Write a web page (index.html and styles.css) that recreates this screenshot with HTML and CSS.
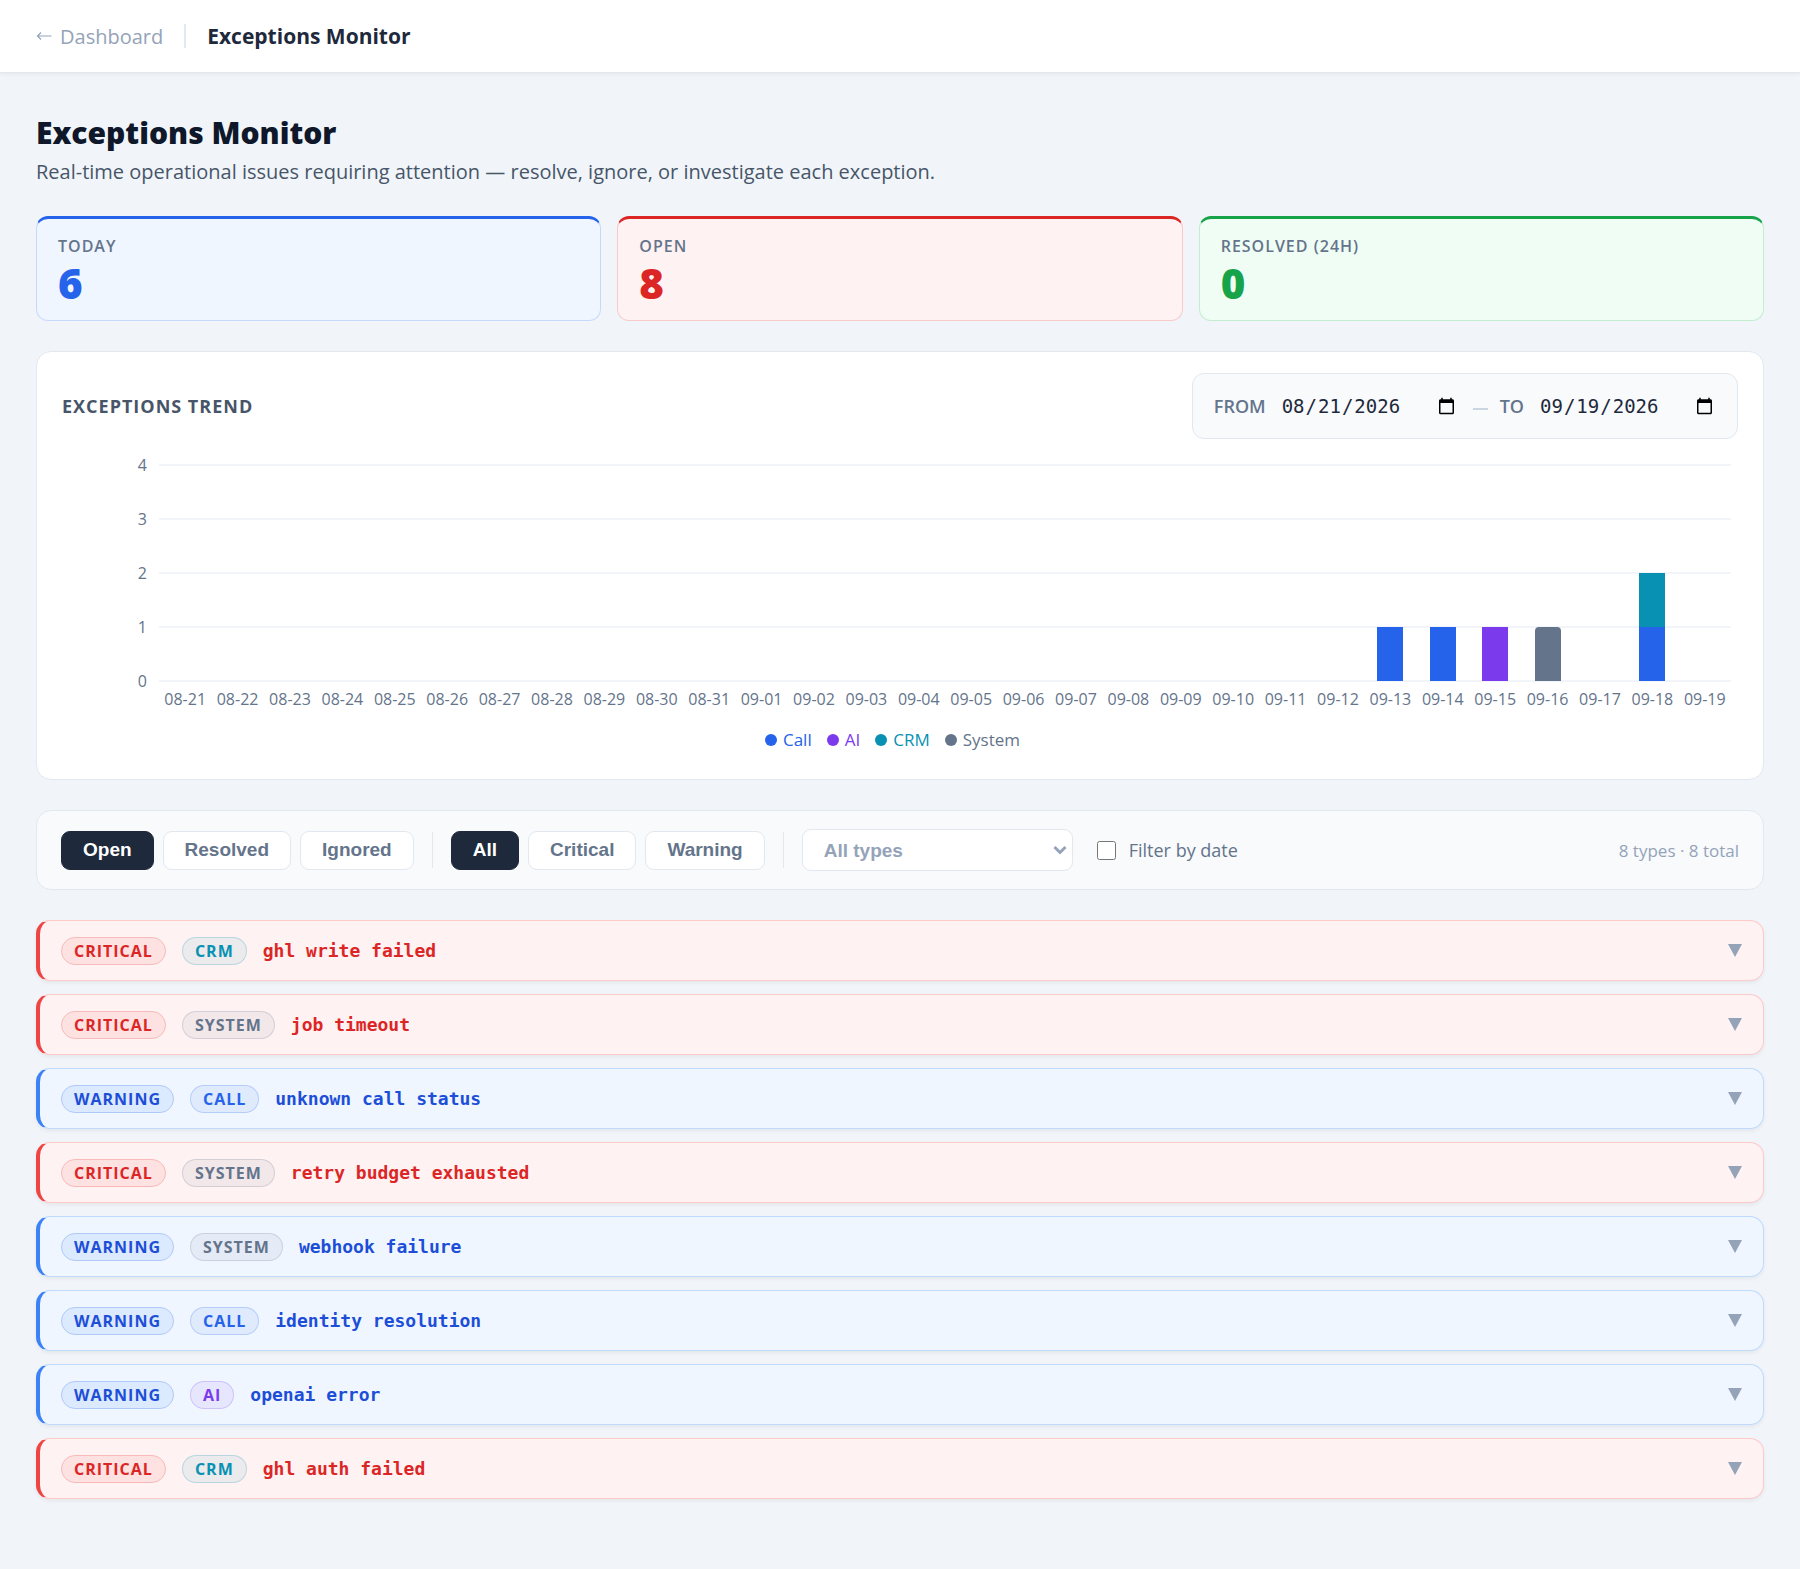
FILE: index.html
```html
<!DOCTYPE html>
<html lang="en">
<head>
<meta charset="utf-8">
<meta name="viewport" content="width=device-width, initial-scale=1">
<title>Exceptions Monitor</title>
<link rel="stylesheet" href="styles.css">
</head>
<body>
<svg class="sprite" aria-hidden="true">
  <symbol id="caret" viewBox="0 0 14 13"><path d="M0 0h14L7 13z" fill="currentColor"/></symbol>
</svg>
<header class="topbar">
  <a class="back" href="#"><svg class="back-arrow" viewBox="0 0 16 10" aria-hidden="true"><path d="M15.500 5H1.500M5 1.500L1.500 5L5 8.500" fill="none" stroke="currentColor" stroke-width="1.200"/></svg>Dashboard</a>
  <span class="divider"></span>
  <span class="topbar-title">Exceptions Monitor</span>
</header>
<main class="page">
  <div class="intro">
    <h1>Exceptions Monitor</h1>
    <p>Real-time operational issues requiring attention — resolve, ignore, or investigate each exception.</p>
  </div>

  <section class="stats">
    <div class="stat stat-today"><span class="stat-label">TODAY</span><strong class="stat-value">6</strong></div>
    <div class="stat stat-open"><span class="stat-label">OPEN</span><strong class="stat-value">8</strong></div>
    <div class="stat stat-resolved"><span class="stat-label">RESOLVED (24H)</span><strong class="stat-value">0</strong></div>
  </section>

  <section class="trend">
    <div class="trend-head">
      <h2>EXCEPTIONS TREND</h2>
      <div class="range">
        <label for="from">FROM</label><input id="from" type="date" value="2026-08-21">
        <span class="range-dash"></span>
        <label for="to">TO</label><input id="to" type="date" value="2026-09-19">
      </div>
    </div>
    <div class="chart">
      <div class="y-axis"><span>4</span><span>3</span><span>2</span><span>1</span><span>0</span></div>
      <div class="plot">
        <div class="day"></div><div class="day"></div><div class="day"></div><div class="day"></div><div class="day"></div><div class="day"></div>
        <div class="day"></div><div class="day"></div><div class="day"></div><div class="day"></div><div class="day"></div><div class="day"></div>
        <div class="day"></div><div class="day"></div><div class="day"></div><div class="day"></div><div class="day"></div><div class="day"></div>
        <div class="day"></div><div class="day"></div><div class="day"></div><div class="day"></div><div class="day"></div>
        <div class="day"><i class="bar bg-call"></i></div>
        <div class="day"><i class="bar bg-call"></i></div>
        <div class="day"><i class="bar bg-ai"></i></div>
        <div class="day"><i class="bar bg-system"></i></div>
        <div class="day"></div>
        <div class="day"><i class="bar bg-crm"></i><i class="bar bg-call"></i></div>
        <div class="day"></div>
      </div>
      <div class="x-axis">
        <span>08-21</span><span>08-22</span><span>08-23</span><span>08-24</span><span>08-25</span><span>08-26</span><span>08-27</span><span>08-28</span><span>08-29</span><span>08-30</span><span>08-31</span><span>09-01</span><span>09-02</span><span>09-03</span><span>09-04</span><span>09-05</span><span>09-06</span><span>09-07</span><span>09-08</span><span>09-09</span><span>09-10</span><span>09-11</span><span>09-12</span><span>09-13</span><span>09-14</span><span>09-15</span><span>09-16</span><span>09-17</span><span>09-18</span><span>09-19</span>
      </div>
    </div>
    <ul class="legend">
      <li class="fg-call"><i class="dot bg-call"></i>Call</li>
      <li class="fg-ai"><i class="dot bg-ai"></i>AI</li>
      <li class="fg-crm"><i class="dot bg-crm"></i>CRM</li>
      <li class="fg-system"><i class="dot bg-system"></i>System</li>
    </ul>
  </section>

  <section class="filters">
    <div class="group">
      <button class="chip active" type="button">Open</button>
      <button class="chip" type="button">Resolved</button>
      <button class="chip" type="button">Ignored</button>
    </div>
    <span class="filter-sep"></span>
    <div class="group">
      <button class="chip active" type="button">All</button>
      <button class="chip" type="button">Critical</button>
      <button class="chip" type="button">Warning</button>
    </div>
    <span class="filter-sep"></span>
    <div class="type-select">
      <select aria-label="Exception type"><option>All types</option></select>
      <svg class="chevron" viewBox="0 0 14 10" aria-hidden="true"><path d="M1.500 2L7 7.500L12.500 2" fill="none" stroke="currentColor" stroke-width="3"/></svg>
    </div>
    <label class="by-date"><input type="checkbox">Filter by date</label>
    <span class="count">8 types · 8 total</span>
  </section>

  <ul class="list">
    <li><button class="row critical" type="button"><span class="tag level">CRITICAL</span><span class="tag crm">CRM</span><span class="name">ghl write failed</span><svg class="caret"><use href="#caret"/></svg></button></li>
    <li><button class="row critical" type="button"><span class="tag level">CRITICAL</span><span class="tag system">SYSTEM</span><span class="name">job timeout</span><svg class="caret"><use href="#caret"/></svg></button></li>
    <li><button class="row warning" type="button"><span class="tag level">WARNING</span><span class="tag call">CALL</span><span class="name">unknown call status</span><svg class="caret"><use href="#caret"/></svg></button></li>
    <li><button class="row critical" type="button"><span class="tag level">CRITICAL</span><span class="tag system">SYSTEM</span><span class="name">retry budget exhausted</span><svg class="caret"><use href="#caret"/></svg></button></li>
    <li><button class="row warning" type="button"><span class="tag level">WARNING</span><span class="tag system">SYSTEM</span><span class="name">webhook failure</span><svg class="caret"><use href="#caret"/></svg></button></li>
    <li><button class="row warning" type="button"><span class="tag level">WARNING</span><span class="tag call">CALL</span><span class="name">identity resolution</span><svg class="caret"><use href="#caret"/></svg></button></li>
    <li><button class="row warning" type="button"><span class="tag level">WARNING</span><span class="tag ai">AI</span><span class="name">openai error</span><svg class="caret"><use href="#caret"/></svg></button></li>
    <li><button class="row critical" type="button"><span class="tag level">CRITICAL</span><span class="tag crm">CRM</span><span class="name">ghl auth failed</span><svg class="caret"><use href="#caret"/></svg></button></li>
  </ul>
</main>
</body>
</html>
```
FILE: styles.css
```css
* { box-sizing: border-box; }

body {
  margin: 0;
  background: #f1f5f9;
  color: #0f172a;
  font-family: "Open Sans", "Noto Sans", sans-serif;
}

ul { list-style: none; margin: 0; padding: 0; }
.sprite { display: none; }

.bg-call { background: #2563eb; }
.bg-ai { background: #7c3aed; }
.bg-crm { background: #0891b2; }
.bg-system { background: #64748b; }
.fg-call { color: #2563eb; }
.fg-ai { color: #7c3aed; }
.fg-crm { color: #0891b2; }
.fg-system { color: #64748b; }

/* Top bar */
.topbar {
  display: flex;
  align-items: center;
  gap: 21px;
  height: 73px;
  padding: 0 36px;
  background: #fff;
  border-bottom: 1px solid #e2e8f0;
  box-shadow: 0 1px 4px rgba(15, 23, 42, .06);
  font-size: 20px;
}
.back { display: flex; align-items: center; gap: 8px; color: #94a3b8; text-decoration: none; }
.back-arrow { width: 16px; height: 10px; }
.divider { width: 2px; height: 24px; background: #e2e8f0; }
.topbar-title { font-size: 21px; font-weight: 700; color: #1e293b; }

/* Page */
.page { display: flex; flex-direction: column; gap: 30px; padding: 39px 36px 70px; }

.intro h1 { margin: 0; font-size: 30px; font-weight: 800; line-height: 42px; }
.intro p { margin: 0; font-size: 20px; line-height: 36px; color: #475569; }

.stats { display: grid; grid-template-columns: repeat(3, 1fr); gap: 16px; margin-top: -4px; }
.stat {
  display: flex;
  flex-direction: column;
  padding: 15px 21px 13px;
  border: 1px solid;
  border-top-width: 3px;
  border-radius: 12px;
}
.stat-label { font-size: 16px; font-weight: 600; line-height: 24px; letter-spacing: 1px; color: #64748b; }
.stat-value { font-size: 42px; font-weight: 800; line-height: 49px; }
.stat-today { background: #eff6ff; border-color: #2563eb #c7d9fb #c7d9fb; color: #2563eb; }
.stat-open { background: #fef2f2; border-color: #dc2626 #f8caca #f8caca; color: #dc2626; }
.stat-resolved { background: #f0fdf4; border-color: #16a34a #c3ecd0 #c3ecd0; color: #16a34a; }

/* Trend chart */
.trend { padding: 21px 25px 26px; background: #fff; border: 1px solid #e2e8f0; border-radius: 15px; }
.trend-head { display: flex; align-items: center; justify-content: space-between; }
.trend h2 { margin: 0; font-size: 18px; font-weight: 700; letter-spacing: 1px; color: #475569; }
.range {
  display: flex;
  align-items: center;
  height: 66px;
  padding: 0 21px;
  background: #f8fafc;
  border: 1px solid #e2e8f0;
  border-radius: 12px;
  font-size: 18px;
  font-weight: 600;
  color: #64748b;
}
.range input {
  width: 177px;
  margin-left: 15px;
  padding: 0;
  border: 0;
  background: none;
  color: #1e293b;
  font: 19px "DejaVu Sans Mono", monospace;
}
.range-dash { width: 15px; height: 2px; margin: 6px 12px 0 15px; background: #cbd5e1; }

.chart {
  display: grid;
  grid-template-columns: 85px 1fr;
  column-gap: 12px;
  row-gap: 5px;
  padding: 25px 7px 0 0;
  font-size: 16px;
  line-height: 24px;
  color: #64748b;
}
.y-axis { display: flex; flex-direction: column; justify-content: space-between; margin: -11px 0; text-align: right; }
.plot {
  display: grid;
  grid-template-columns: repeat(30, 1fr);
  height: 218px;
  padding-bottom: 1px;
  background: repeating-linear-gradient(#f1f5f9 0 2px, transparent 2px 54px);
}
.day { display: flex; flex-direction: column; justify-content: flex-end; align-items: center; }
.bar { width: 26px; height: 54px; }
.bar.bg-system { border-radius: 4px 4px 0 0; }
.x-axis { grid-column: 2; display: grid; grid-template-columns: repeat(30, 1fr); text-align: center; }

.legend { display: flex; justify-content: center; margin-top: 16px; font-size: 17px; line-height: 26px; }
.legend li { display: flex; align-items: center; gap: 6px; margin-right: 15px; }
.dot { width: 12px; height: 12px; border-radius: 50%; }

/* Filters */
.filters {
  display: flex;
  align-items: center;
  gap: 18px;
  height: 80px;
  padding: 0 24px;
  background: #f8fafc;
  border: 1px solid #e2e8f0;
  border-radius: 15px;
}
.group { display: flex; gap: 9px; }
.chip, .type-select select {
  border: 1px solid #e2e8f0;
  border-radius: 9px;
  background: #fff;
  font: bold 19px "Liberation Sans", Arial, sans-serif;
}
.chip { height: 39px; padding: 0 21px; color: #64748b; }
.chip.active { background: #1e293b; border-color: #1e293b; color: #fff; }
.filter-sep { width: 1px; height: 36px; background: #e2e8f0; }
.type-select { display: grid; align-items: center; }
.type-select select {
  grid-area: 1 / 1;
  appearance: none;
  width: 271px;
  height: 42px;
  padding: 0 21px;
  color: #94a3b8;
}
.chevron { grid-area: 1 / 1; justify-self: end; width: 14px; height: 10px; margin-right: 6px; color: #94a3b8; pointer-events: none; }
.by-date { display: flex; align-items: center; gap: 13px; margin-left: 6px; font-size: 18px; color: #64748b; }
.by-date input { width: 19px; height: 19px; margin: 0; }
.count { margin-left: auto; font-size: 17px; color: #94a3b8; }

/* Exception rows */
.list { display: grid; gap: 13px; }
.row {
  display: flex;
  align-items: center;
  gap: 16px;
  width: 100%;
  height: 61px;
  padding: 0 21px;
  border: 1px solid;
  border-left-width: 4px;
  border-radius: 14px;
  box-shadow: 0 2px 4px rgba(15, 23, 42, .06);
  font: inherit;
  text-align: left;
}
.critical { background: #fef2f2; border-color: #fecaca #fecaca #fecaca #ef4444; color: #dc2626; }
.warning { background: #eff6ff; border-color: #bfdbfe #bfdbfe #bfdbfe #3b82f6; color: #1d4ed8; }
.tag {
  padding: 0 12px;
  border: 1px solid;
  border-radius: 14px;
  font-size: 16px;
  font-weight: 700;
  line-height: 26px;
  letter-spacing: 1px;
}
.critical .level { background: #fee2e2; border-color: #f8baba; }
.warning .level { background: #dbeafe; border-color: #b1c9f7; }
.crm { background: rgba(8, 145, 178, .08); border-color: rgba(8, 145, 178, .22); color: #0891b2; }
.system { background: rgba(100, 116, 139, .08); border-color: rgba(100, 116, 139, .22); color: #64748b; }
.call { background: rgba(37, 99, 235, .08); border-color: rgba(37, 99, 235, .22); color: #2563eb; }
.ai { background: rgba(124, 58, 237, .08); border-color: rgba(124, 58, 237, .22); color: #7c3aed; }
.name { font: bold 18px "DejaVu Sans Mono", monospace; }
.caret { width: 14px; height: 13px; margin-left: auto; color: #94a3b8; }
```
